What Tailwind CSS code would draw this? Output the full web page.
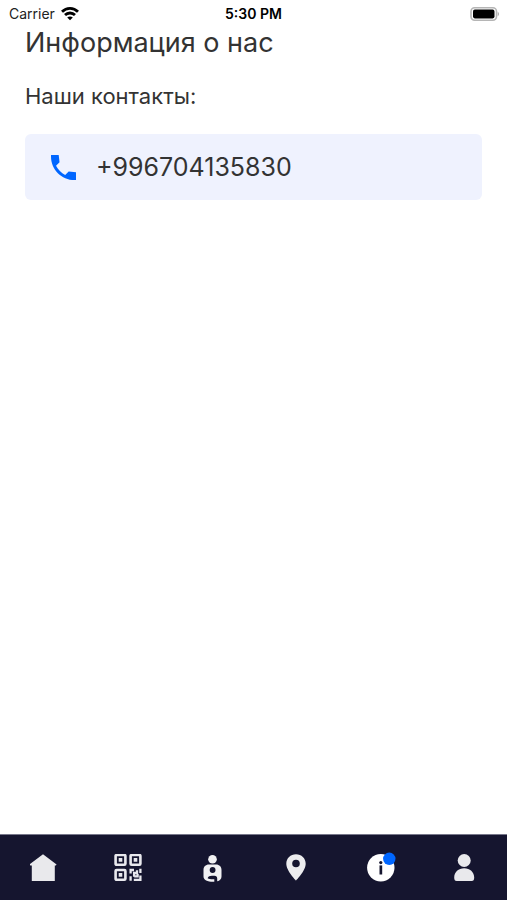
<!DOCTYPE html>
<html lang="ru">
<head>
    <meta charset="UTF-8">
    <meta name="viewport" content="width=device-width, initial-scale=1.0">
    <title>Информация о нас</title>
    <script src="https://cdn.jsdelivr.net/npm/@tailwindcss/browser@4"></script>
</head>
<body class="flex flex-col min-h-screen bg-white text-[#333333] font-['Inter',sans-serif]">
    <header class="grid grid-cols-3 items-center h-7 px-2 text-black">
        <div class="flex items-center gap-1.5 pl-px text-sm text-[#222222]">
            <span>Carrier</span>
            <svg class="w-[18px] h-[14px]" viewBox="0 0 18 14" fill="none" stroke="#000" stroke-width="2.8">
                <path d="M1 4.8C5.5.3 12.5.3 17 4.8"/>
                <path d="M4 8.1c2.8-2.8 7.2-2.8 10 0"/>
                <path d="M9 13.3 6.2 10.5c1.6-1.5 4-1.5 5.6 0z" fill="#000" stroke="none"/>
            </svg>
        </div>
        <time class="text-center text-sm font-semibold">5:30 PM</time>
        <svg class="justify-self-end w-[30px] h-[14px]" viewBox="0 0 30 14">
            <rect x="2" y=".8" width="25.5" height="12.4" rx="3.6" fill="#fff" stroke="#b5b5b5" stroke-width="1.6"/>
            <rect x="4" y="2.6" width="21.5" height="8.8" rx="1.8" fill="#000"/>
            <path d="M28.7 4.8v4.4c1.8-.8 1.8-3.6 0-4.4z" fill="#b0b0b0"/>
        </svg>
    </header>

    <main class="flex-1 px-[25px]">
        <h1 class="text-[27px] leading-[30px]">Информация о нас</h1>
        <h2 class="mt-[22px] text-[22px] leading-8">Наши контакты:</h2>
        <a href="tel:+996704135830" class="mt-[22px] flex items-center gap-5 h-[66px] px-[26px] rounded-md bg-[#eff2fe] text-[25px]">
            <svg class="w-[25px] h-[25px]" viewBox="3 3 18 18" fill="#0066ff">
                <path d="M21 15.46l-5.27-.61-2.52 2.52c-2.83-1.44-5.15-3.75-6.59-6.59l2.53-2.53L8.54 3H3.03C2.45 13.18 10.82 21.55 21 20.97z"/>
            </svg>
            <span class="pt-0.5">+996704135830</span>
        </a>
    </main>

    <nav class="grid grid-cols-6 h-[66px] pl-0.5 bg-[#15152f] border-t border-[#77778a]">
        <a href="#home" aria-label="Главная" class="flex items-center justify-center">
            <svg class="w-7 h-7" viewBox="0 0 28 28" fill="#e9e9ec">
                <path d="M13 .3 26.600 10.400l-.8 1.200H24.800V27H1.800V11.600H.4L-.4 10.400z"/>
            </svg>
        </a>
        <a href="#qr" aria-label="QR-код" class="flex items-center justify-center">
            <svg class="w-7 h-7" viewBox="0 0 28 28" fill="none" stroke="#e9e9ee" stroke-width="2.6">
                <rect x="1.6" y="1" width="9.8" height="9.8" rx="1"/>
                <rect x="16.6" y="1" width="9.8" height="9.8" rx="1"/>
                <rect x="1.6" y="16" width="9.8" height="9.8" rx="1"/>
                <path fill="#e9e9ee" stroke="none" d="M4.7 4.1h3.6v3.6H4.7zM19.7 4.1h3.6v3.6h-3.6zM4.7 19.1h3.6v3.6H4.7z"/>
                <path stroke-width="2.3" d="M20 16h-3.4v3.6M26.4 14.8v4.2M23 16.2v2.8h-2.9v3.7M23.6 20v2.3h-3.4M16.6 22.3v4.5M19.8 25.9h6.6v-4.4"/>
            </svg>
        </a>
        <a href="#staff" aria-label="Специалисты" class="flex items-center justify-center">
            <svg class="w-7 h-7" viewBox="0 0 28 28">
                <circle cx="14.5" cy="5.300" r="4.300" fill="#f1f1f3"/>
                <path d="M11 10.600h7c3.400 0 5.500 2.300 5.500 5.300v6.600c0 2.500-1.600 4.200-4.300 4.800v-2.700c0-1.900-1-2.800-2.700-2.800h-2.600c-2.200 0-3.600.8-4.300 2.400 1.400.8 3 1.100 5.100 1.100h1.600v2.500c-6.300.3-10.800-1.700-10.800-5.300v-6.600c0-3 2.100-5.300 5.500-5.300z" fill="#f1f1f3"/>
                <circle cx="14.600" cy="16" r="2.900" fill="#15152f"/>
            </svg>
        </a>
        <a href="#map" aria-label="Карта" class="flex items-center justify-center">
            <svg class="w-7 h-7" viewBox="0 0 28 28">
                <path d="M13 .2c-5.500 0-9.700 4.100-9.700 9.500C3.300 16.800 13 26.500 13 26.500s9.700-9.700 9.700-16.800C22.700 4.300 18.500.2 13 .2zm0 5.500a3.800 3.800 0 1 1 0 7.600 3.800 3.800 0 0 1 0-7.600z" fill="#ececee"/>
            </svg>
        </a>
        <a href="#info" aria-label="Информация" aria-current="page" class="flex items-center justify-center">
            <svg class="w-7 h-7 overflow-visible" viewBox="0 0 28 28">
                <circle cx="13.800" cy="13.800" r="13.700" fill="#fff"/>
                <circle cx="13.800" cy="8.600" r="1.600" fill="#15152f"/>
                <path d="M12.500 11.400h2.700v9.100h-2.700z" fill="#15152f"/>
                <circle cx="22.300" cy="4.800" r="6.200" fill="#0066ff"/>
            </svg>
        </a>
        <a href="#profile" aria-label="Профиль" class="flex items-center justify-center">
            <svg class="w-7 h-7" viewBox="0 0 28 28" fill="#e9e9ec">
                <circle cx="13.200" cy="6.500" r="6.500"/>
                <path d="M3.200 23.500c0-5.500 4.300-9.300 10-9.300s10 3.800 10 9.300c0 2.500-.8 3.500-2.500 3.500h-15c-1.700 0-2.500-1-2.500-3.500z"/>
            </svg>
        </a>
    </nav>
</body>
</html>
